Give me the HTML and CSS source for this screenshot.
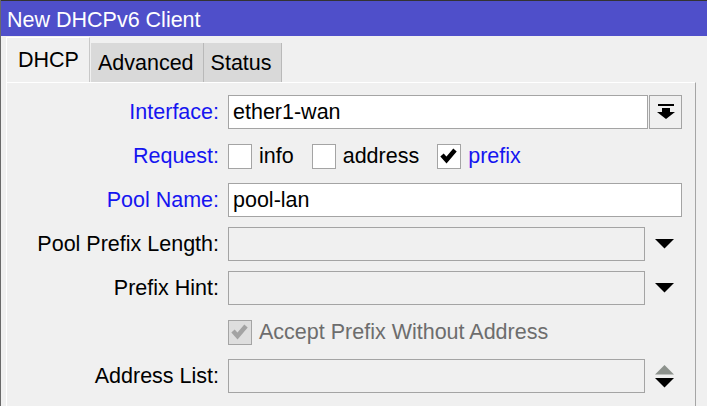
FILE: index.html
```html
<!DOCTYPE html>
<html lang="en">
  <head>
    <meta charset="UTF-8" />
    <meta name="viewport" content="width=device-width, initial-scale=1.0" />
    <title>New DHCPv6 Client</title>
    <link rel="stylesheet" href="styles.css">
  </head>
  <body>
    <div class="window">
      <div class="titlebar">New DHCPv6 Client</div>

      <div class="tabs">
        <div class="tab active">DHCP</div>
        <div class="tab">Advanced</div>
        <div class="tab">Status</div>
      </div>

      <div class="panel">
        <div class="form">
          <!-- Interface -->
          <div class="label blue">Interface:</div>
          <div class="field">
            <div class="input">ether1-wan</div>
            <div class="pick-btn">
              <svg width="20" height="18" viewBox="0 0 20 18">
                <rect x="2" y="1" width="16" height="2" fill="#000" />
                <rect x="6" y="5" width="8" height="5" fill="#000" />
                <polygon points="1,9 19,9 10,16" fill="#000" />
              </svg>
            </div>
          </div>

          <!-- Request -->
          <div class="label blue">Request:</div>
          <div class="field checks">
            <span class="check"></span><span class="opt">info</span>
            <span class="check"></span><span class="opt">address</span>
            <span class="check">
              <svg width="22" height="22" viewBox="0 0 22 22">
                <polyline points="4,10 8.5,15 17,5" fill="none" stroke="#000" stroke-width="4.5" />
              </svg>
            </span><span class="opt blue">prefix</span>
          </div>

          <!-- Pool name -->
          <div class="label blue">Pool Name:</div>
          <div class="field">
            <div class="input">pool-lan</div>
          </div>

          <div class="label">Pool Prefix Length:</div>
          <div class="field">
            <div class="input disabled"></div>
            <div class="arrow-zone">
              <svg width="19" height="10" viewBox="0 0 19 10"><polygon points="0,0 19,0 9.5,9.5" fill="#000" /></svg>
            </div>
          </div>

          <div class="label">Prefix Hint:</div>
          <div class="field">
            <div class="input disabled"></div>
            <div class="arrow-zone">
              <svg width="19" height="10" viewBox="0 0 19 10"><polygon points="0,0 19,0 9.5,9.5" fill="#000" /></svg>
            </div>
          </div>

          <div class="label"></div>
          <div class="field checks">
            <span class="check off">
              <svg width="22" height="22" viewBox="0 0 22 22">
                <polyline points="4,10 8.5,15 17,5" fill="none" stroke="#a3a3a3" stroke-width="4.5" />
              </svg>
            </span><span class="opt grey">Accept Prefix Without Address</span>
          </div>

          <div class="label">Address List:</div>
          <div class="field">
            <div class="input disabled"></div>
            <div class="arrow-zone">
              <svg width="19" height="23" viewBox="0 0 19 23">
                <polygon points="9.5,0 19,9.5 0,9.5" fill="#8d928d" />
                <polygon points="0,13 19,13 9.5,22.5" fill="#000" />
              </svg>
            </div>
          </div>
        </div>
      </div>
    </div>
  </body>
</html>
```

FILE: styles.css
```css
body {
  margin: 0;
  font-family: "Liberation Sans", Arial, sans-serif;
  font-size: 21.5px;
  background-color: #f0f0f0;
  overflow: hidden;
}

.window {
  height: 406px;
  border-left: 1px solid #6a6a6a;
  box-sizing: border-box;
}

.titlebar {
  height: 31px;
  padding: 4px 0 0 6px;
  line-height: 31px;
  border-top: 1px solid #333;
  background-color: #4f4fca;
  color: white;
}

.tabs {
  display: flex;
  align-items: flex-end;
  height: 45px;
  padding-top: 1px;
  margin-left: 5px;
}

.tab {
  height: 39px;
  box-sizing: border-box;
  padding: 8px 9px 0 7px;
  line-height: 24px;
  background-color: #d9d9d9;
  border-right: 1px solid #b9b9b9;
}

.tab.active {
  height: 45px;
  padding: 10px 10px 0 11px;
  background-color: #f0f0f0;
  border-top: 1px solid #fff;
  border-left: 1px solid #fff;
  border-right: 1px solid #c8c8c8;
  margin-right: 1px;
}

.panel {
  margin-left: 5px;
  width: 688px;
  height: 330px;
  padding-top: 12px;
  border-top: 1px solid #fff;
  border-left: 1px solid #fff;
  border-right: 1px solid #a5a5a5;
}

.form {
  display: grid;
  grid-template-columns: 212px 454px;
  grid-auto-rows: 34px;
  column-gap: 9px;
  row-gap: 10px;
}

.label {
  align-self: center;
  text-align: right;
  color: #000;
}

.blue {
  color: #1515f0;
}

.field {
  display: flex;
  align-items: center;
  gap: 1px;
}

.input {
  flex: 1;
  height: 34px;
  box-sizing: border-box;
  padding-left: 4px;
  line-height: 32px;
  border: 1px solid #a4a4a4;
  background-color: #fff;
}

.input.disabled {
  background-color: #f0f0f0;
}

.pick-btn {
  width: 33px;
  height: 34px;
  box-sizing: border-box;
  border: 1px solid #a4a4a4;
  background-color: #f0f0f0;
  display: flex;
  justify-content: center;
  align-items: center;
}

.arrow-zone {
  width: 36px;
  display: flex;
  justify-content: center;
}

.checks {
  gap: 0;
}

.check {
  width: 24px;
  height: 25px;
  box-sizing: border-box;
  border: 1px solid #a4a4a4;
  background-color: #fff;
  display: flex;
  justify-content: center;
  align-items: center;
}

.check.off {
  background-color: #dedede;
}

.opt {
  margin-left: 7px;
  margin-right: 18px;
}

.grey {
  color: #6d6d6d;
}
```
